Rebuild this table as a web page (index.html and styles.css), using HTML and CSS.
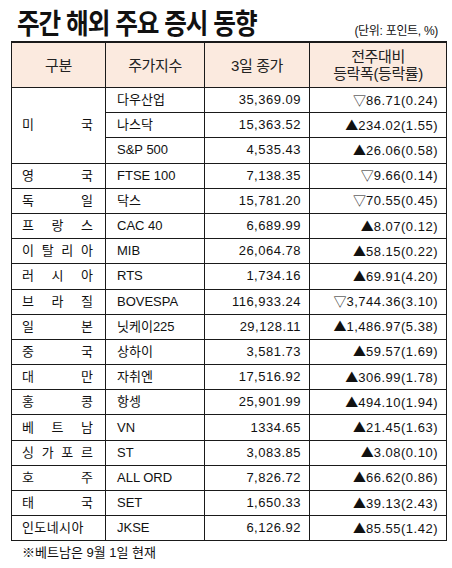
FILE: index.html
```html
<!DOCTYPE html>
<html lang="ko">
<head>
    <meta charset="UTF-8">
    <title>주간 해외 주요 증시 동향</title>
    <link rel="stylesheet" href="styles.css">
</head>
<body>
<div class="container">
    <div class="title-row">
        <h1><span>주간 해외 주요 증시 동향</span></h1>
        <span class="unit">(단위: 포인트, %)</span>
    </div>
    <table class="market">
        <colgroup>
            <col class="c1">
            <col class="c2">
            <col class="c3">
            <col class="c4">
        </colgroup>
        <thead>
        <tr>
            <th>구분</th>
            <th>주가지수</th>
            <th>3일 종가</th>
            <th>전주대비<br>등락폭(등락률)</th>
        </tr>
        </thead>
        <tbody>
        <tr>
            <td class="nation" rowspan="3">미 국</td>
            <td class="name">다우산업</td>
            <td class="num">35,369.09</td>
            <td class="num"><span class="arr">▽</span>86.71(0.24)</td>
        </tr>
        <tr>
            <td class="name">나스닥</td>
            <td class="num">15,363.52</td>
            <td class="num"><span class="arr">▲</span>234.02(1.55)</td>
        </tr>
        <tr>
            <td class="name">S&amp;P 500</td>
            <td class="num">4,535.43</td>
            <td class="num"><span class="arr">▲</span>26.06(0.58)</td>
        </tr>
        <tr>
            <td class="nation">영 국</td>
            <td class="name">FTSE 100</td>
            <td class="num">7,138.35</td>
            <td class="num"><span class="arr">▽</span>9.66(0.14)</td>
        </tr>
        <tr>
            <td class="nation">독 일</td>
            <td class="name">닥스</td>
            <td class="num">15,781.20</td>
            <td class="num"><span class="arr">▽</span>70.55(0.45)</td>
        </tr>
        <tr>
            <td class="nation">프 랑 스</td>
            <td class="name">CAC 40</td>
            <td class="num">6,689.99</td>
            <td class="num"><span class="arr">▲</span>8.07(0.12)</td>
        </tr>
        <tr>
            <td class="nation">이 탈 리 아</td>
            <td class="name">MIB</td>
            <td class="num">26,064.78</td>
            <td class="num"><span class="arr">▲</span>58.15(0.22)</td>
        </tr>
        <tr>
            <td class="nation">러 시 아</td>
            <td class="name">RTS</td>
            <td class="num">1,734.16</td>
            <td class="num"><span class="arr">▲</span>69.91(4.20)</td>
        </tr>
        <tr>
            <td class="nation">브 라 질</td>
            <td class="name">BOVESPA</td>
            <td class="num">116,933.24</td>
            <td class="num"><span class="arr">▽</span>3,744.36(3.10)</td>
        </tr>
        <tr>
            <td class="nation">일 본</td>
            <td class="name">닛케이225</td>
            <td class="num">29,128.11</td>
            <td class="num"><span class="arr">▲</span>1,486.97(5.38)</td>
        </tr>
        <tr>
            <td class="nation">중 국</td>
            <td class="name">상하이</td>
            <td class="num">3,581.73</td>
            <td class="num"><span class="arr">▲</span>59.57(1.69)</td>
        </tr>
        <tr>
            <td class="nation">대 만</td>
            <td class="name">자취엔</td>
            <td class="num">17,516.92</td>
            <td class="num"><span class="arr">▲</span>306.99(1.78)</td>
        </tr>
        <tr>
            <td class="nation">홍 콩</td>
            <td class="name">항셍</td>
            <td class="num">25,901.99</td>
            <td class="num"><span class="arr">▲</span>494.10(1.94)</td>
        </tr>
        <tr>
            <td class="nation">베 트 남</td>
            <td class="name">VN</td>
            <td class="num">1334.65</td>
            <td class="num"><span class="arr">▲</span>21.45(1.63)</td>
        </tr>
        <tr>
            <td class="nation">싱 가 포 르</td>
            <td class="name">ST</td>
            <td class="num">3,083.85</td>
            <td class="num"><span class="arr">▲</span>3.08(0.10)</td>
        </tr>
        <tr>
            <td class="nation">호 주</td>
            <td class="name">ALL ORD</td>
            <td class="num">7,826.72</td>
            <td class="num"><span class="arr">▲</span>66.62(0.86)</td>
        </tr>
        <tr>
            <td class="nation">태 국</td>
            <td class="name">SET</td>
            <td class="num">1,650.33</td>
            <td class="num"><span class="arr">▲</span>39.13(2.43)</td>
        </tr>
        <tr>
            <td class="nation tight">인도네시아</td>
            <td class="name">JKSE</td>
            <td class="num">6,126.92</td>
            <td class="num"><span class="arr">▲</span>85.55(1.42)</td>
        </tr>
        </tbody>
    </table>
    <p class="note">※베트남은 9월 1일 현재</p>
</div>
</body>
</html>
```

FILE: styles.css
```css
body {
    margin: 0;
    background: #fff;
    color: #111;
    font-family: "Liberation Sans", "Noto Sans CJK KR", sans-serif;
}

.container {
    width: 435px;
    padding: 3px 0 0 11px;
}

.title-row {
    display: flex;
    justify-content: space-between;
    align-items: flex-end;
    height: 35px;
}

h1 {
    margin: 0 0 0 6px;
    font: bold 28px/32px "Noto Sans CJK KR", sans-serif;
    letter-spacing: -1.2px;
    white-space: nowrap;
}

h1 span {
    display: inline-block;
    transform: scaleX(0.88);
    transform-origin: left center;
}

.unit {
    padding-right: 8px;
    font-size: 12px;
    line-height: 14px;
    letter-spacing: -0.3px;
}

.market {
    margin-top: 3px;
    width: 435px;
    border-collapse: collapse;
    table-layout: fixed;
    font-size: 13px;
}

.c1 { width: 94px; }
.c2 { width: 99px; }
.c3 { width: 105px; }
.c4 { width: 137px; }

.market th, .market td {
    border: 1px solid #1a1a1a;
    padding: 0;
}

.market th {
    height: 44px;
    background: #fbeadf;
    font-weight: normal;
    font-size: 15px;
    line-height: 17px;
    letter-spacing: -0.4px;
    color: #222;
}

.market td {
    height: 24.2px;
    line-height: 16px;
    white-space: nowrap;
}

.market thead th {
    border-top-width: 2px;
}

.nation {
    padding: 0 12px 0 10px !important;
    text-align: justify;
    text-align-last: justify;
}

.nation.tight {
    padding-right: 9px !important;
    letter-spacing: 0.4px;
}

.name {
    padding-left: 11px !important;
}

.num {
    text-align: right;
    padding-right: 8px !important;
    letter-spacing: 0.5px;
}

.arr {
    font-family: "Noto Sans CJK KR", sans-serif;
    letter-spacing: 0;
}

.note {
    margin: 3px 0 0 11px;
    font-size: 13px;
    line-height: 18px;
}
```
